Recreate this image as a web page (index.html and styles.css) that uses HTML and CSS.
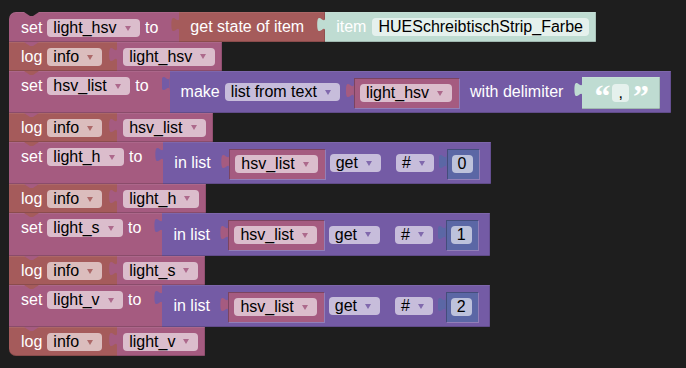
FILE: index.html
```html
<!DOCTYPE html>
<html>
<head>
<meta charset="utf-8">
<link rel="stylesheet" href="styles.css">
</head>
<body>
<div class="ws">

  <div class="stmt c-var first">
    <div class="body"><span class="lbl">set</span><span class="fld">light_hsv<i class="arr"></i></span><span class="lbl to">to</span></div>
    <div class="val c-log getstate"><span class="lbl">get state of item</span></div>
    <div class="val c-sh item"><span class="lbl">item</span><span class="fld txt">HUESchreibtischStrip_Farbe</span></div>
  </div>

  <div class="stmt c-log">
    <div class="body log"><span class="lbl">log</span><span class="fld">info<i class="arr"></i></span></div>
    <div class="val c-var getter"><span class="fld">light_hsv<i class="arr"></i></span></div>
  </div>

  <div class="stmt c-var">
    <div class="body"><span class="lbl">set</span><span class="fld">hsv_list<i class="arr"></i></span><span class="lbl to">to</span></div>
    <div class="val c-list make">
      <span class="lbl">make</span>
      <span class="fld">list from text<i class="arr"></i></span>
      <div class="val c-var getter hole after-fld"><span class="fld">light_hsv<i class="arr"></i></span></div>
      <span class="lbl after-in">with delimiter</span>
      <div class="val c-sh textb">
        <span class="q q1">“</span><span class="fld txt">,</span><span class="q q2">”</span>
      </div>
    </div>
  </div>

  <div class="stmt c-log">
    <div class="body log"><span class="lbl">log</span><span class="fld">info<i class="arr"></i></span></div>
    <div class="val c-var getter"><span class="fld">hsv_list<i class="arr"></i></span></div>
  </div>

  <div class="stmt c-var">
    <div class="body"><span class="lbl">set</span><span class="fld">light_h<i class="arr"></i></span><span class="lbl to">to</span></div>
    <div class="val c-list inlist">
      <span class="lbl">in list</span>
      <div class="val c-var getter hole after-lbl"><span class="fld">hsv_list<i class="arr"></i></span></div>
      <span class="fld">get<i class="arr"></i></span>
      <span class="fld hash">#<i class="arr"></i></span>
      <div class="val c-num num hole"><span class="fld txt">0</span></div>
    </div>
  </div>

  <div class="stmt c-log">
    <div class="body log"><span class="lbl">log</span><span class="fld">info<i class="arr"></i></span></div>
    <div class="val c-var getter"><span class="fld">light_h<i class="arr"></i></span></div>
  </div>

  <div class="stmt c-var">
    <div class="body"><span class="lbl">set</span><span class="fld">light_s<i class="arr"></i></span><span class="lbl to">to</span></div>
    <div class="val c-list inlist tall">
      <span class="lbl">in list</span>
      <div class="val c-var getter hole after-lbl"><span class="fld">hsv_list<i class="arr"></i></span></div>
      <span class="fld">get<i class="arr"></i></span>
      <span class="fld hash">#<i class="arr"></i></span>
      <div class="val c-num num hole"><span class="fld txt">1</span></div>
    </div>
  </div>

  <div class="stmt c-log">
    <div class="body log"><span class="lbl">log</span><span class="fld">info<i class="arr"></i></span></div>
    <div class="val c-var getter"><span class="fld">light_s<i class="arr"></i></span></div>
  </div>

  <div class="stmt c-var">
    <div class="body"><span class="lbl">set</span><span class="fld">light_v<i class="arr"></i></span><span class="lbl to">to</span></div>
    <div class="val c-list inlist">
      <span class="lbl">in list</span>
      <div class="val c-var getter hole after-lbl"><span class="fld">hsv_list<i class="arr"></i></span></div>
      <span class="fld">get<i class="arr"></i></span>
      <span class="fld hash">#<i class="arr"></i></span>
      <div class="val c-num num hole"><span class="fld txt">2</span></div>
    </div>
  </div>

  <div class="stmt c-log last">
    <div class="body log"><span class="lbl">log</span><span class="fld">info<i class="arr"></i></span></div>
    <div class="val c-var getter"><span class="fld">light_v<i class="arr"></i></span></div>
  </div>

</div>
</body>
</html>
```
FILE: styles.css
```css
* { box-sizing: border-box; }

html, body {
  margin: 0;
  background: #1e1e1e;
}

body {
  font-family: "Liberation Sans", Arial, sans-serif;
  font-size: 16px;
}

.ws {
  display: flex;
  flex-direction: column;
  align-items: flex-start;
  padding: 12px 0 0 9px;
}

.c-var  { --c: #a55b80; }
.c-log  { --c: #a55b5b; }
.c-list { --c: #745ba5; }
.c-num  { --c: #5b67a5; }
.c-sh   { --c: #bfdcd2; }

/* statement rows */
.stmt {
  position: relative;
  display: flex;
  align-items: stretch;
}

.stmt::after {
  content: "";
  position: absolute;
  left: 15px;
  bottom: -4px;
  width: 15px;
  height: 4px;
  background: var(--c);
  clip-path: polygon(0 0, 100% 0, 60% 100%, 40% 100%);
  z-index: 5;
}

.first::before {
  content: "";
  position: absolute;
  left: 15px;
  top: 0;
  width: 15px;
  height: 4px;
  background: #1e1e1e;
  clip-path: polygon(0 0, 100% 0, 60% 100%, 40% 100%);
  z-index: 5;
}

.body {
  display: flex;
  align-items: flex-start;
  gap: 5px;
  padding: 6px 21px 5px 12px;
  background: var(--c);
  box-shadow: inset 0 1px 0 rgba(255, 255, 255, 0.08), inset 0 -1px 0 rgba(0, 0, 0, 0.16);
}

.body.log { padding-right: 15px; }

.to { margin-left: 0.5px; }

.first .body {
  border-top-left-radius: 7px;
  padding-top: 7px;
}

.last .body { border-bottom-left-radius: 7px; }

/* value blocks */
.val {
  position: relative;
  display: flex;
  align-items: center;
  background: var(--c);
  box-shadow: inset 0 1px 0 rgba(255, 255, 255, 0.08), inset 0 -1px 0 rgba(0, 0, 0, 0.16), inset -1px 0 0 rgba(0, 0, 0, 0.12);
}

.val::before {
  content: "";
  position: absolute;
  left: -8px;
  top: 5px;
  width: 8px;
  height: 15px;
  background: var(--c);
  clip-path: path("M8,0 C8,10 0,-8 0,7.5 S8,5 8,15 Z");
}

.lbl {
  color: #fff;
  line-height: 18px;
  white-space: nowrap;
}

.fld {
  display: flex;
  align-items: center;
  gap: 8px;
  height: 18px;
  padding: 0 9px 0 6px;
  border-radius: 4px;
  background: rgba(255, 255, 255, 0.6);
  color: #000;
  line-height: 18px;
  white-space: nowrap;
}

.fld.txt { padding: 0 6px; }

.arr {
  display: block;
  width: 0;
  height: 0;
  border-left: 3.5px solid transparent;
  border-right: 3.5px solid transparent;
  border-top: 5px solid var(--c);
  opacity: 0.85;
}

.getstate {
  height: 30px;
  padding: 0 21px 0 11px;
}

.item {
  height: 30px;
  gap: 6px;
  padding: 0 7px 0 11px;
}

.getter { padding: 0 7px 0 6px; }

.hole {
  align-self: flex-start;
  height: 30px;
  margin-top: 7px;
  box-shadow: inset 1px 1px 0 rgba(0, 0, 0, 0.25), 1px 1px 0 rgba(255, 255, 255, 0.22);
}

.make {
  height: 42px;
  gap: 5px;
  padding: 0 11px;
}

.inlist {
  height: 42px;
  gap: 5px;
  padding: 0 12px 0 11px;
}

.inlist.tall { height: 43px; }

.after-fld { margin-left: 9px; }
.after-lbl { margin-left: 13.5px; }
.after-in  { margin-left: 6px; }

.hash { margin-left: 10px; }

.num {
  margin-left: 7.8px;
  padding: 0 6px 0 5px;
}

.textb {
  align-self: flex-start;
  height: 32px;
  margin-top: 6px;
  margin-left: 14px;
  padding: 0 13px 0 12px;
}

.q {
  display: block;
  position: relative;
  top: 3px;
  height: 18px;
  color: #fff;
  font-family: "Liberation Serif", "Times New Roman", serif;
  font-weight: bold;
  font-size: 32px;
  line-height: 18px;
  text-align: center;
}

.q1 { width: 13px; margin-right: 5px; }
.q2 { width: 14px; margin-left: 4px; }
```
